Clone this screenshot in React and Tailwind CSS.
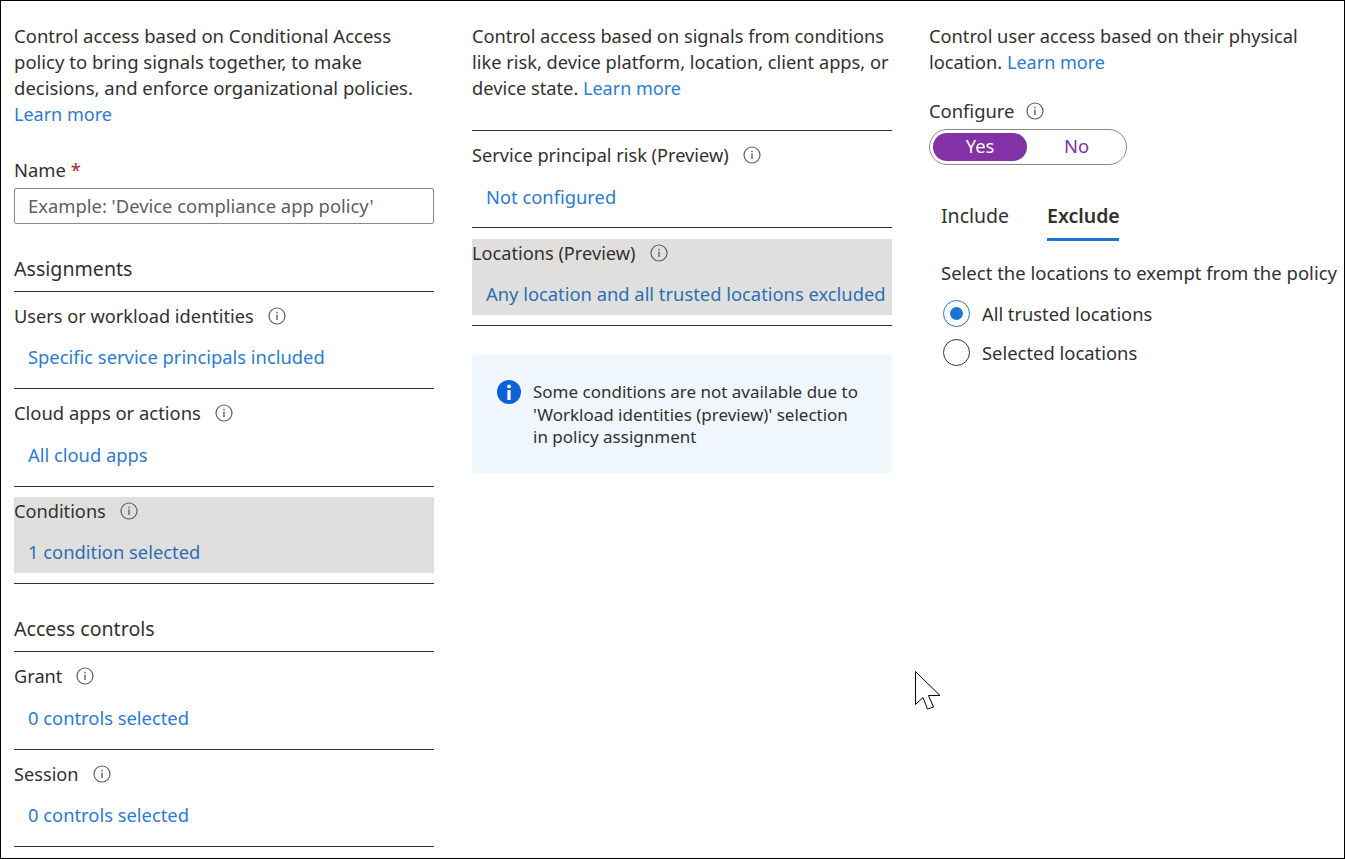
import React from 'react';

const InfoIcon = ({ className = '' }) => (
    <svg width="18" height="18" viewBox="0 0 18 18" className={className} fill="none">
        <circle cx="9" cy="9" r="8" stroke="#605e5c" strokeWidth="1.2" />
        <rect x="8.3" y="7.6" width="1.4" height="5.4" fill="#605e5c" />
        <rect x="8.3" y="4.8" width="1.4" height="1.5" fill="#605e5c" />
    </svg>
);

const ConditionRow = ({ label, value, top = 'pt-[10px]', gap = 'mt-[13px]', labelSize = 'text-[18.2px]', active = false, height = 'h-[97px]' }) => (
    <div className={`${height} border-b border-[#323130] ${top}`}>
        <div className={`h-[76px] ${active ? 'bg-[#e1dfdd]' : ''}`}>
            <div className={`flex h-[28px] items-center ${labelSize}`}>
                <span>{label}</span>
                <InfoIcon className="ml-[14px]" />
            </div>
            <div className={`${gap} h-[28px] whitespace-nowrap pl-[14px] text-[18.35px] leading-[28px] ${active ? 'text-[#2a6fb5]' : 'text-[#2b7cd3]'}`}>{value}</div>
        </div>
    </div>
);

const SectionTitle = ({ children }) => (
    <div className="mt-[27px] flex h-[41px] items-center border-b border-[#323130] pb-[5px] text-[19.6px]">{children}</div>
);

const LearnMore = () => <a className="text-[18px] text-[#2b7cd3]">Learn more</a>;

const App = () => {
    return (
        <div className="relative h-[859px] w-[1345px] overflow-hidden border border-black bg-white font-['Noto_Sans',sans-serif] text-[18.4px] leading-[26px] text-[#323130]">
            <div className="flex pt-[22px] pl-[13px]">

                {/* Left column */}
                <div className="w-[420px] shrink-0">
                    <p className="whitespace-nowrap text-[18.5px]">
                        Control access based on Conditional Access<br />
                        policy to bring signals together, to make<br />
                        decisions, and enforce organizational policies.<br />
                        <LearnMore />
                    </p>
                    <div className="mt-[30px] h-[26px]">
                        Name <span className="text-[#a4262c]">*</span>
                    </div>
                    <div className="mt-[5px] flex h-[36px] items-center rounded-[2px] border border-[#8a8886] pl-[13px] text-[#605e5c]">
                        Example: 'Device compliance app policy'
                    </div>
                    <SectionTitle>Assignments</SectionTitle>
                    <ConditionRow label="Users or workload identities" value="Specific service principals included" />
                    <ConditionRow label="Cloud apps or actions" value="All cloud apps" gap="mt-[14px]" labelSize="text-[18.4px]" height="h-[98px]" />
                    <ConditionRow label="Conditions" value="1 condition selected" active />
                    <SectionTitle>Access controls</SectionTitle>
                    <ConditionRow label="Grant" value="0 controls selected" gap="mt-[14px]" height="h-[98px]" />
                    <ConditionRow label="Session" value="0 controls selected" />
                </div>

                {/* Middle column */}
                <div className="ml-[38px] w-[420px] shrink-0">
                    <p className="h-[108px] whitespace-nowrap border-b border-[#323130] text-[18.25px]">
                        Control access based on signals from conditions<br />
                        like risk, device platform, location, client apps, or<br />
                        device state. <LearnMore />
                    </p>
                    <ConditionRow label="Service principal risk (Preview)" value="Not configured" gap="mt-[14px]" />
                    <ConditionRow label="Locations (Preview)" value="Any location and all trusted locations excluded" top="pt-[11px]" active height="h-[98px]" />
                    <div className="mt-[29px] flex h-[118px] rounded-[2px] bg-[#eff6fc] pt-[26px] pl-[25px] text-[17px] leading-[22.5px]">
                        <svg width="24" height="24" viewBox="0 0 24 24" className="-mt-[1px] shrink-0">
                            <circle cx="12" cy="12" r="12" fill="#0f62d6" />
                            <rect x="10.4" y="10" width="3.2" height="10" fill="#fff" />
                            <circle cx="12" cy="6.4" r="1.9" fill="#fff" />
                        </svg>
                        <p className="ml-[12px] whitespace-nowrap">
                            Some conditions are not available due to<br />
                            'Workload identities (preview)' selection<br />
                            in policy assignment
                        </p>
                    </div>
                </div>

                {/* Right column */}
                <div className="ml-[37px] w-[410px] shrink-0">
                    <p className="whitespace-nowrap text-[18.25px]">
                        Control user access based on their physical<br />
                        location. <LearnMore />
                    </p>
                    <div className="mt-[22px] flex h-[28px] items-center">
                        <span>Configure</span>
                        <InfoIcon className="ml-[12px]" />
                    </div>
                    <div className="mt-[4px] flex h-[36px] w-[198px] items-center rounded-full border border-[#8a8886] px-[3px]">
                        <div className="flex h-[28px] w-[95px] items-center justify-center rounded-full bg-[#8331a7] pb-[2px] text-white">Yes</div>
                        <div className="flex h-[28px] w-[97px] items-center justify-center pb-[2px] pl-[3px] text-[#8331a7]">No</div>
                    </div>
                    <div className="mt-[35px] flex pl-[12px] text-[19.5px]">
                        <div className="h-[41px] w-[106px] pt-[3px]">Include</div>
                        <div className="h-[41px] w-[72px] whitespace-nowrap border-b-[3px] border-[#1a76d2] pt-[3px] font-semibold">Exclude</div>
                    </div>
                    <div className="mt-[19px] whitespace-nowrap pl-[12px] text-[18.5px]">Select the locations to exempt from the policy</div>
                    <div className="mt-[14px] flex h-[27px] items-center pl-[14px] text-[18.3px]">
                        <span className="flex h-[27px] w-[27px] items-center justify-center rounded-full border border-[#1a76d2]">
                            <span className="h-[13px] w-[13px] rounded-full bg-[#1a76d2]" />
                        </span>
                        <span className="ml-[12px]">All trusted locations</span>
                    </div>
                    <div className="mt-[12px] flex h-[27px] items-center pl-[14px] text-[18.4px]">
                        <span className="h-[27px] w-[27px] rounded-full border border-[#323130]" />
                        <span className="ml-[12px]">Selected locations</span>
                    </div>
                </div>
            </div>

            {/* Mouse pointer */}
            <svg width="27" height="40" viewBox="0 0 27 40" className="absolute top-[669px] left-[913px]">
                <path d="M1.5 1.5 L26 25.5 L14.5 25.5 L19.5 37 L13.5 39 L9 27.5 L1.5 34.5 Z" fill="#fff" stroke="#000" strokeWidth="1" />
            </svg>
        </div>
    );
};

export default App;
